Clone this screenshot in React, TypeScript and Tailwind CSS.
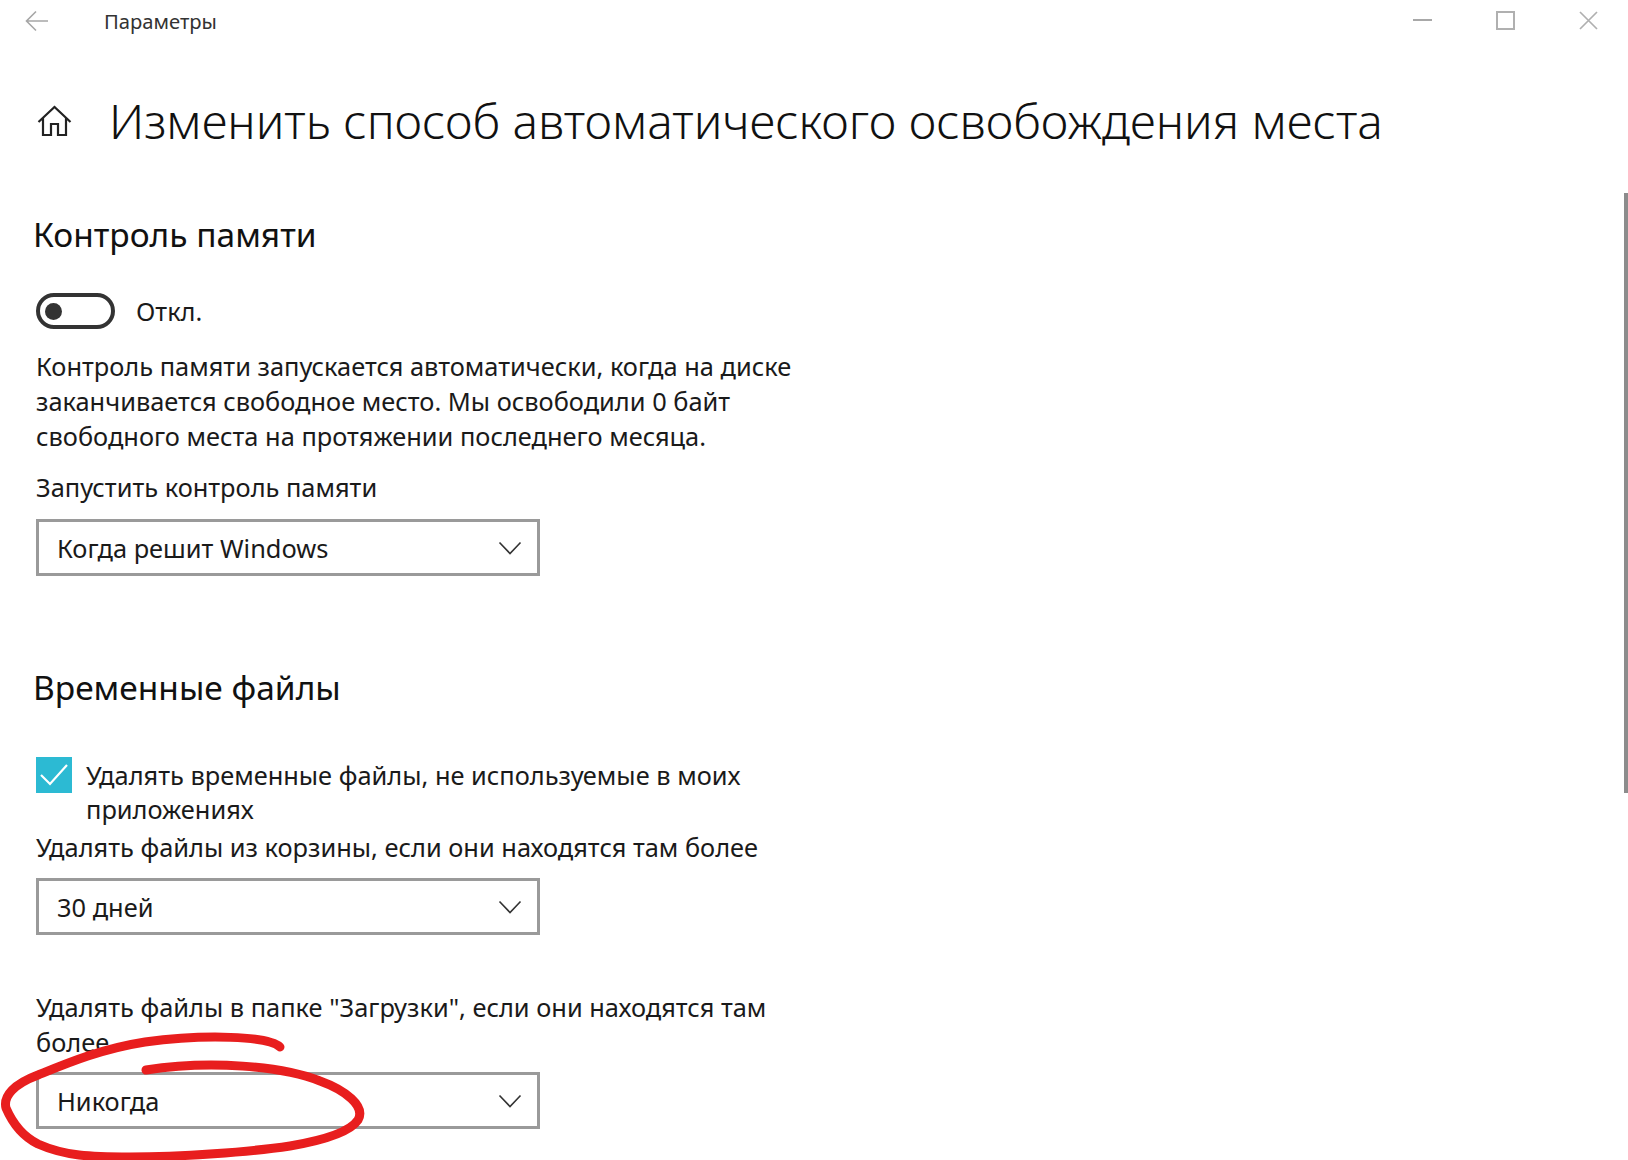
function Dropdown({ label }: { label: string }) {
  return (
    <div className="flex h-[57px] w-[504px] items-center justify-between border-[3px] border-[#9a9a9a] pl-[18px] pr-[15px] text-[25.4px] text-[#1a1a1a]">
      <span>{label}</span>
      <svg className="h-[16px] w-[24px]" viewBox="0 0 24 16" fill="none" stroke="#333" strokeWidth="1.6">
        <path d="M1.5 2.5 12 13.5 22.5 2.5" />
      </svg>
    </div>
  );
}

export default function App() {
  return (
    <div className="relative h-[1160px] w-[1628px] overflow-hidden bg-white font-['Noto_Sans',sans-serif] text-[#1a1a1a]">
      {/* title bar */}
      <div className="flex h-[44px] items-center">
        <svg className="ml-[25px] -mt-[2px] h-[22px] w-[24px]" viewBox="0 0 24 22" fill="none" stroke="#a6a6a6" strokeWidth="1.6">
          <path d="M23 11H2M11 1.5 1.5 11l9.5 9.5" />
        </svg>
        <span className="ml-[55px] -mt-[1px] text-[20.2px] text-[#333]">Параметры</span>
        <div className="ml-auto mr-[30px] -mt-[4px] flex items-center gap-[64px]">
          <div className="h-[2px] w-[19px] bg-[#a8a8a8]" />
          <div className="h-[19px] w-[19px] border-2 border-[#b0b0b0]" />
          <svg className="h-[19px] w-[19px]" viewBox="0 0 19 19" fill="none" stroke="#b0b0b0" strokeWidth="1.7">
            <path d="M1 1l17 17M18 1 1 18" />
          </svg>
        </div>
      </div>

      {/* page heading */}
      <div className="mt-[39px] flex h-[76px] items-center">
        <svg className="ml-[37px] h-[32px] w-[35px]" viewBox="0 0 35 32" fill="none" stroke="#222" strokeWidth="2.2">
          <path d="M1.5 17 17.5 2l16 15M6 13v17h8V19h7v11h8V13" />
        </svg>
        <h1 className="ml-[37px] text-[47.8px] font-light leading-none text-[#111]">Изменить способ автоматического освобождения места</h1>
      </div>

      <div className="pl-[36px]">
        <h2 className="-ml-[3px] mt-[53px] text-[33.5px] leading-[44px] text-[#111]">Контроль памяти</h2>

        <div className="mt-[37px] flex items-center">
          <div className="flex h-[36px] w-[79px] items-center rounded-full border-4 border-[#333] pl-[5px]">
            <div className="h-[17px] w-[17px] rounded-full bg-[#333]" />
          </div>
          <span className="ml-[21px] text-[25.4px] leading-[35px]">Откл.</span>
        </div>

        <p className="mt-[20px] w-[790px] text-[25.4px] leading-[34.8px]">
          Контроль памяти запускается автоматически, когда на диске заканчивается свободное место. Мы освободили 0 байт свободного места на протяжении последнего месяца.
        </p>

        <p className="mt-[17px] text-[25.4px] leading-[35px]">Запустить контроль памяти</p>
        <div className="mt-[14px]">
          <Dropdown label="Когда решит Windows" />
        </div>

        <h2 className="-ml-[3px] mt-[89px] text-[33.5px] leading-[44px] text-[#111]">Временные файлы</h2>

        <div className="mt-[48px] flex items-start">
          <div className="flex h-[36px] w-[36px] shrink-0 items-center justify-center bg-[#2cbad3]">
            <svg className="h-[24px] w-[30px]" viewBox="0 0 30 24" fill="none" stroke="#fff" strokeWidth="2.2">
              <path d="M2 12l9 9L28 2" />
            </svg>
          </div>
          <p className="ml-[14px] mt-[2px] w-[700px] text-[25.4px] leading-[33.5px]">Удалять временные файлы, не используемые в моих приложениях</p>
        </div>

        <p className="mt-[4px] text-[25.4px] leading-[35px]">Удалять файлы из корзины, если они находятся там более</p>
        <div className="mt-[13px]">
          <Dropdown label="30 дней" />
        </div>

        <p className="mt-[55px] w-[790px] text-[25.4px] leading-[34.5px]">Удалять файлы в папке "Загрузки", если они находятся там более</p>
        <div className="mt-[13px]">
          <Dropdown label="Никогда" />
        </div>
      </div>

      {/* scrollbar thumb */}
      <div className="absolute right-0 top-[193px] h-[600px] w-[4px] bg-[#8c8c8c]" />

      {/* red marker annotation */}
      <svg className="absolute left-0 top-0 h-[1160px] w-[1628px]" viewBox="0 0 1628 1160" fill="none" stroke="#e81e1e" strokeWidth="9" strokeLinecap="round" strokeLinejoin="round">
        <path d="M280 1047C268 1036 205 1034 145 1042C100 1049 65 1064 38 1075C14 1084 3 1096 6 1108C12 1122 22 1136 38 1144C65 1156 90 1157 130 1157C180 1157 250 1152 290 1146C325 1140 350 1132 358 1120C366 1106 345 1090 320 1081C282 1066 210 1060 146 1070" />
      </svg>
    </div>
  );
}
